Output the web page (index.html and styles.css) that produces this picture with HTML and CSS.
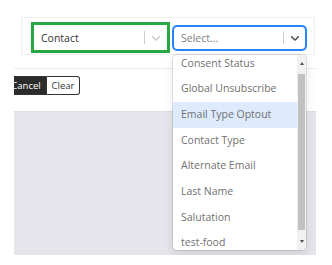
FILE: index.html
```html
<!DOCTYPE html>
<html lang="en">
<head>
    <meta charset="UTF-8">
    <meta name="viewport" content="width=device-width, initial-scale=1.0">
    <title>Filter Builder</title>
    <link rel="stylesheet" href="styles.css">
</head>
<body>
    <div class="page">
        <div class="filter-bar">
            <div class="picked">
                <div class="select">
                    <span class="value">Contact</span>
                    <span class="sep"></span>
                    <span class="indicator">
                        <svg viewBox="0 0 20 20" width="14" height="14"><path d="M4.516 7.548c0.436-0.446 1.043-0.481 1.576 0l3.908 3.747 3.908-3.747c0.533-0.481 1.141-0.446 1.574 0 0.436 0.445 0.408 1.197 0 1.615-0.406 0.418-4.695 4.502-4.695 4.502-0.217 0.223-0.502 0.335-0.787 0.335s-0.57-0.112-0.789-0.335c0 0-4.287-4.084-4.695-4.502s-0.436-1.17 0-1.615z"/></svg>
                    </span>
                </div>
            </div>
            <div class="select select-focus">
                <span class="placeholder">Select...</span>
                <span class="sep"></span>
                <span class="indicator">
                    <svg viewBox="0 0 20 20" width="14" height="14"><path d="M4.516 7.548c0.436-0.446 1.043-0.481 1.576 0l3.908 3.747 3.908-3.747c0.533-0.481 1.141-0.446 1.574 0 0.436 0.445 0.408 1.197 0 1.615-0.406 0.418-4.695 4.502-4.695 4.502-0.217 0.223-0.502 0.335-0.787 0.335s-0.57-0.112-0.789-0.335c0 0-4.287-4.084-4.695-4.502s-0.436-1.17 0-1.615z"/></svg>
                </span>
                <div class="menu">
                    <div class="menu-list">
                        <div class="option">Consent Status</div>
                        <div class="option">Global Unsubscribe</div>
                        <div class="option option-active">Email Type Optout</div>
                        <div class="option">Contact Type</div>
                        <div class="option">Alternate Email</div>
                        <div class="option">Last Name</div>
                        <div class="option">Salutation</div>
                        <div class="option">test-food</div>
                    </div>
                    <div class="scrollbar">
                        <span class="arrow arrow-up"></span>
                        <span class="thumb"></span>
                        <span class="arrow arrow-down"></span>
                    </div>
                </div>
            </div>
        </div>
        <div class="rule"></div>
        <div class="actions">
            <button class="btn btn-dark">Cancel</button>
            <button class="btn btn-light">Clear</button>
        </div>
        <div class="canvas"></div>
    </div>
</body>
</html>
```

FILE: styles.css
```css
body {
    margin: 0;
    background: #fff;
    font-family: "Open Sans", "Liberation Sans", sans-serif;
    font-size: 10.5px;
    color: #333;
}
.page {
    margin-left: 14px;
    width: 302px;
}
.filter-bar {
    display: flex;
    align-items: center;
    gap: 3px;
    margin: 17px 1px 0 7px;
    padding: 4px 7px 1px 9px;
    border: 1px solid #efefef;
    background: #fff;
}
.picked {
    width: 133px;
    height: 25px;
    border: 3px solid #27a844;
    display: flex;
}
.select {
    position: relative;
    display: flex;
    align-items: center;
    flex: 1;
    height: 100%;
    background: #fff;
}
.select-focus {
    flex: none;
    width: 131px;
    height: 22px;
    border: 1px solid #2684ff;
    border-radius: 4px;
    box-shadow: 0 0 0 1px #2684ff;
}
.value, .placeholder {
    flex: 1;
    padding-left: 7px;
    white-space: nowrap;
}
.value {
    color: #333;
}
.placeholder {
    color: #808080;
}
.sep {
    width: 1px;
    height: 13px;
    background: #ccc;
}
.indicator {
    width: 22px;
    display: flex;
    align-items: center;
    justify-content: center;
}
.indicator svg {
    fill: #ccc;
}
.select-focus .indicator {
    width: 21px;
}
.select-focus .indicator svg {
    fill: #555;
}
.menu {
    position: absolute;
    top: 28px;
    left: -1px;
    width: 133px;
    height: 195px;
    display: flex;
    background: #fff;
    border-radius: 4px;
    box-shadow: 0 0 0 1px rgba(0, 0, 0, 0.1), 0 4px 11px rgba(0, 0, 0, 0.1);
    overflow: hidden;
    z-index: 2;
}
.menu-list {
    flex: 1;
    overflow: hidden;
}
.option {
    height: 25.7px;
    line-height: 25.7px;
    padding-left: 8px;
    color: #707070;
    white-space: nowrap;
}
.option:first-child {
    margin-top: -4px;
}
.option-active {
    background: #deebff;
}
.scrollbar {
    width: 9px;
    display: flex;
    flex-direction: column;
    align-items: center;
    background: #f1f1f1;
}
.arrow {
    height: 17px;
    display: flex;
    align-items: center;
}
.arrow-up::before, .arrow-down::before {
    content: "";
    border-left: 2.5px solid transparent;
    border-right: 2.5px solid transparent;
}
.arrow-up::before {
    border-bottom: 3px solid #505050;
}
.arrow-down::before {
    border-top: 3px solid #505050;
}
.thumb {
    width: 7px;
    flex: 1;
    margin: 2px 0 3px;
    background: #c1c1c1;
}
.rule {
    height: 1px;
    margin-top: 13px;
    background: #ececec;
}
.actions {
    display: flex;
    margin-top: 7px;
    height: 19px;
    overflow: hidden;
}
.btn {
    font-family: "Open Sans", "Liberation Sans", sans-serif;
    font-size: 9.5px;
    height: 19px;
    padding: 0;
    border: 1px solid #333;
    cursor: pointer;
}
.btn-dark {
    margin-left: -9px;
    width: 42px;
    background: #2b2b2b;
    color: #fff;
    border-radius: 3px 0 0 3px;
}
.btn-light {
    width: 33px;
    background: #fff;
    color: #333;
    border-left: none;
    border-radius: 0 3px 3px 0;
}
.canvas {
    height: 143px;
    margin-top: 16px;
    background: #e6e5eb;
    border-top: 1px solid #dcdce2;
}
```
